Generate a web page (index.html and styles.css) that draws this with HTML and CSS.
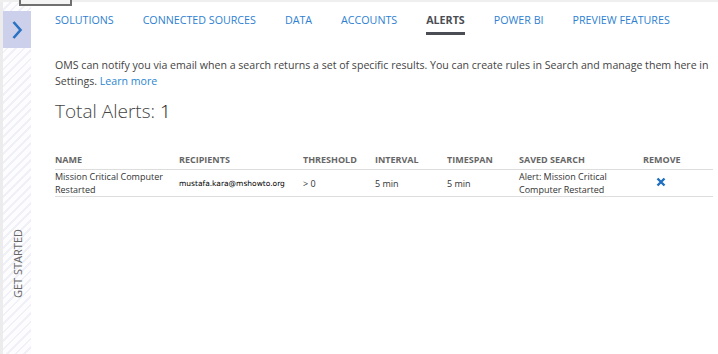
FILE: index.html
```html
<!DOCTYPE html>
<html lang="en">
<head>
    <meta charset="UTF-8">
    <title>Alerts - Settings</title>
    <link rel="stylesheet" href="styles.css">
</head>
<body>
    <div class="top-band"></div>
    <div class="frame-stub"></div>
    <div class="page">
        <div class="rail">
            <div class="rail-btn">
                <svg width="14" height="22" viewBox="0 0 14 22"><path d="M3.5 3 L10.5 11 L3.5 19" fill="none" stroke="#2a72c2" stroke-width="2.6"/></svg>
            </div>
            <div class="rail-label"><span>GET STARTED</span></div>
        </div>

        <div class="main">
            <nav class="nav">
                <a href="#">SOLUTIONS</a>
                <a href="#">CONNECTED SOURCES</a>
                <a href="#">DATA</a>
                <a href="#">ACCOUNTS</a>
                <a href="#" class="active">ALERTS</a>
                <a href="#">POWER BI</a>
                <a href="#">PREVIEW FEATURES</a>
            </nav>

            <p class="intro">OMS can notify you via email when a search returns a set of specific results. You can create rules in Search and manage them here in Settings. <a href="#">Learn more</a></p>

            <h2 class="total">Total Alerts: <span>1</span></h2>

            <table class="alerts">
                <colgroup>
                    <col style="width: 124px">
                    <col style="width: 124px">
                    <col style="width: 72px">
                    <col style="width: 72px">
                    <col style="width: 72px">
                    <col style="width: 124px">
                    <col style="width: 70px">
                </colgroup>
                <thead>
                    <tr>
                        <th>NAME</th>
                        <th>RECIPIENTS</th>
                        <th>THRESHOLD</th>
                        <th>INTERVAL</th>
                        <th>TIMESPAN</th>
                        <th>SAVED SEARCH</th>
                        <th>REMOVE</th>
                    </tr>
                </thead>
                <tbody>
                    <tr>
                        <td>Mission Critical Computer Restarted</td>
                        <td class="email">mustafa.kara@mshowto.org</td>
                        <td>&gt; 0</td>
                        <td>5 min</td>
                        <td>5 min</td>
                        <td>Alert: Mission Critical Computer Restarted</td>
                        <td class="remove">
                            <svg width="10" height="10" viewBox="0 0 10 10"><path d="M1.5 1.5 L8.5 8.5 M8.5 1.5 L1.5 8.5" stroke="#1f6fc1" stroke-width="2.4"/></svg>
                        </td>
                    </tr>
                </tbody>
            </table>
        </div>
    </div>
</body>
</html>
```

FILE: styles.css
```css
* {
    margin: 0;
    padding: 0;
    box-sizing: border-box;
}

body {
    font-family: 'Open Sans', 'Noto Sans', sans-serif;
    background: white;
    color: #444;
    height: 100vh;
    overflow: hidden;
}

.top-band {
    height: 2px;
    background: #efefef;
}

.frame-stub {
    position: absolute;
    left: 19px;
    top: 0;
    width: 53px;
    height: 6px;
    border: 2px solid #707070;
    border-top: none;
    background: #f4f4f4;
}

.page {
    display: flex;
    height: calc(100vh - 2px);
}

.rail {
    width: 31px;
    border-left: 3px solid #ececec;
    background: repeating-linear-gradient(-45deg, #fdfdff 0px, #fdfdff 4px, #f0f0f7 4px, #f0f0f7 6px);
    display: flex;
    flex-direction: column;
    padding-top: 9px;
}

.rail-btn {
    height: 37px;
    background: #cdd0ea;
    display: flex;
    align-items: center;
    justify-content: center;
}

.rail-label {
    height: 100px;
    margin-top: 165px;
    display: flex;
    align-items: center;
    justify-content: center;
}

.rail-label span {
    transform: rotate(-90deg);
    white-space: nowrap;
    font-size: 11px;
    color: #666;
}

.main {
    flex: 1;
    padding-left: 24px;
}

.nav {
    display: flex;
    gap: 29px;
    height: 32px;
    padding-top: 11px;
}

.nav a {
    font-size: 10.7px;
    color: #2e7fd1;
    text-decoration: none;
    height: 22px;
}

.nav a.active {
    color: #4a4e54;
    font-weight: 700;
    border-bottom: 3px solid #4a4e54;
}

.intro {
    margin-top: 23px;
    font-size: 10.6px;
    line-height: 16px;
    color: #444;
    width: 664px;
}

.intro a {
    color: #2a86d0;
    text-decoration: none;
}

.total {
    margin-top: 9px;
    font-size: 19px;
    font-weight: 300;
    color: #444;
}

.total span {
    color: #111;
}

.alerts {
    margin-top: 29px;
    border-collapse: collapse;
    table-layout: fixed;
    width: 658px;
}

.alerts th {
    text-align: left;
    font-size: 9px;
    font-weight: 700;
    color: #666;
    padding-bottom: 3px;
    border-bottom: 1px solid #ddd;
}

.alerts td {
    font-size: 9px;
    line-height: 13px;
    color: #333;
    padding: 0 8px 0 0;
    height: 27px;
    border-bottom: 1px solid #ddd;
    vertical-align: middle;
}

.alerts td.email {
    font-family: 'DejaVu Sans', sans-serif;
    font-size: 7.5px;
    color: #000;
}

.alerts td.remove {
    padding-left: 13px;
}
```
